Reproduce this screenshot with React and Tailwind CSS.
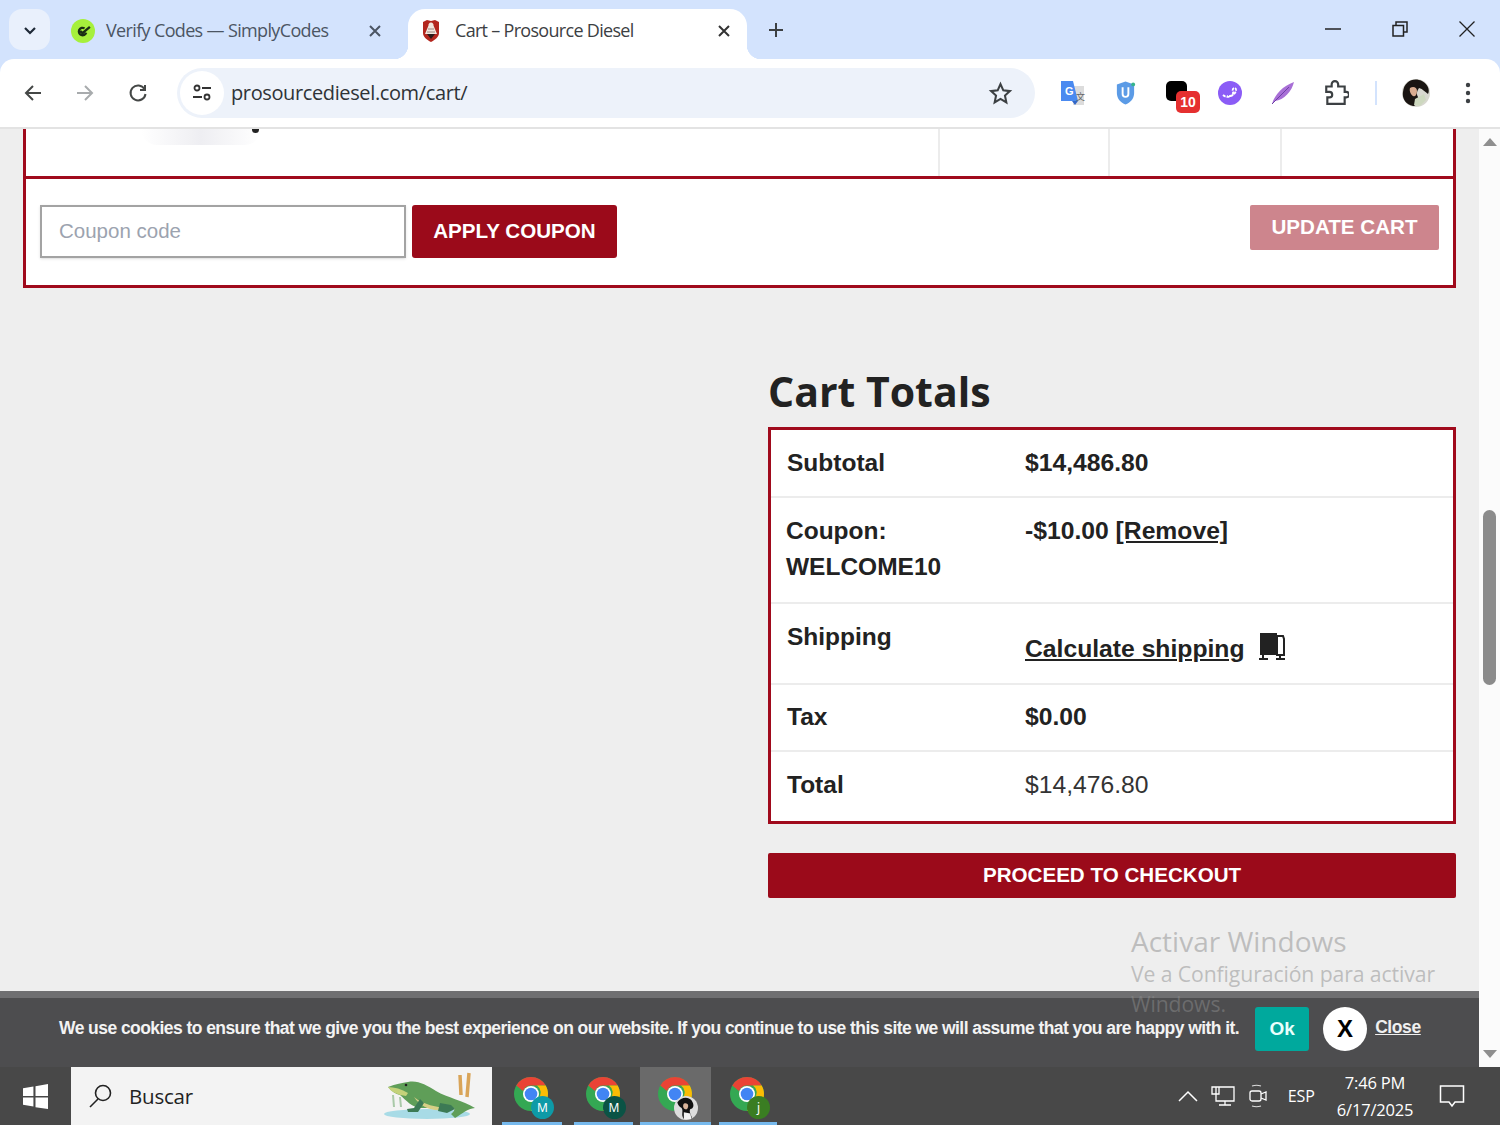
import React from "react";

const Chrome = ({ badge, badgeBg, photo }) => (
  <div className="relative w-[38px] h-[38px]">
    <svg viewBox="0 0 36 36" className="w-[36px] h-[36px]">
      <circle cx="18" cy="18" r="17" fill="#34a853" />
      <path d="M18 1a17 17 0 0 1 14.7 8.5H18a8.5 8.5 0 0 0-8 5.6L3.3 9.5A17 17 0 0 1 18 1z" fill="#ea4335" />
      <path d="M32.7 9.5A17 17 0 0 1 18 35l7.4-12.7A8.5 8.5 0 0 0 24 9.5z" fill="#fbbc04" />
      <circle cx="18" cy="18" r="8" fill="#fff" />
      <circle cx="18" cy="18" r="6.3" fill="#4285f4" />
    </svg>
    {photo ? (
      <svg viewBox="0 0 22 22" className="absolute right-[-3px] bottom-[-6px] w-[24px] h-[24px]">
        <circle cx="11" cy="11" r="11" fill="#ddd" />
        <path d="M3 6c3-5 10-6 13-2 3 4 2 8-1 8-2 3 2 6 1 9H9C6 17 9 14 7 11 5 10 4 9 3 6z" fill="#111" />
        <path d="M9 7c2-1 4 0 4 2s-1 4-3 3-2-4-1-5z" fill="#d9b49a" />
        <path d="M9 15l6 1 1 5H9z" fill="#f2f2f2" />
      </svg>
    ) : (
      <div className={`absolute right-[-3px] bottom-[-5px] w-[23px] h-[23px] rounded-full ${badgeBg} text-white text-[12px] leading-[23px] text-center font-['Noto_Sans',sans-serif]`}>{badge}</div>
    )}
  </div>
);

const Row = ({ label, value, h, labelClass = "", valueClass = "font-bold text-[24.700px]", last }) => (
  <div className={`flex ${h} ${last ? "" : "border-b-2 border-[#ececec]"}`}>
    <div className={`w-[254px] pl-[16px] font-bold ${labelClass}`}>{label}</div>
    <div className={valueClass}>{value}</div>
  </div>
);

export default function App() {
  return (
    <div className="relative w-[1500px] h-[1125px] overflow-hidden flex flex-col bg-[#eeeeee] font-['Liberation_Sans',sans-serif]">
      {/* Tab strip */}
      <div className="h-[59px] shrink-0 bg-[#d3e3fd] flex items-end pl-[9px] font-['Open_Sans',sans-serif]">
        <div className="w-[41px] h-[41px] mb-[9px] rounded-[13px] bg-[#e9f0fc] flex items-center justify-center">
          <svg viewBox="0 0 14 14" className="w-[14px] h-[14px]"><path d="M2 5l5 5 5-5" fill="none" stroke="#1f2937" strokeWidth="2.2" /></svg>
        </div>
        <div className="w-[358px] h-[50px] flex items-center pl-[21px] pr-[27px] pb-[7px] text-[#4b5563] text-[18px] tracking-[-0.65px]">
          <div className="w-[24px] h-[24px] rounded-full bg-[#a6f03c] flex items-center justify-center mr-[11px]">
            <svg viewBox="0 0 16 16" className="w-[17px] h-[17px]"><path d="M9 6A3.500 3.500 0 1 0 10.500 10M5 8.500l2 2 7-6" fill="none" stroke="#1a2e14" strokeWidth="2.200" /></svg>
          </div>
          <span className="flex-1 whitespace-nowrap">Verify Codes — SimplyCodes</span>
          <svg viewBox="0 0 12 12" className="w-[12px] h-[12px]"><path d="M1 1l10 10M11 1L1 11" stroke="#4b5563" strokeWidth="2" /></svg>
        </div>
        <div className="relative w-[339px] h-[50px] bg-white rounded-t-[17px] flex items-center pl-[12px] pr-[17px] pb-[7px] text-[#3c4043] text-[18px] tracking-[-0.7px]">
          <span className="absolute left-[-14px] bottom-0 w-[14px] h-[14px] bg-[radial-gradient(circle_at_0_0,transparent_14px,white_14.5px)]" />
          <span className="absolute right-[-14px] bottom-0 w-[14px] h-[14px] bg-[radial-gradient(circle_at_100%_0,transparent_14px,white_14.5px)]" />
          <svg viewBox="0 0 20 24" className="w-[22px] h-[24px] mr-[13px]">
            <path d="M2 3l4-2 4 1 4-1 4 2v11c0 4-4 7-8 9-4-2-8-5-8-9z" fill="#b3261e" />
            <path d="M10 3.500a2.500 2.500 0 0 1 2.500 3L16 15H4l3.500-8.500A2.500 2.500 0 0 1 10 3.500z" fill="#f1e6de" />
            <path d="M7 10h6M6 13h8" stroke="#8a6d64" strokeWidth="0.800" />
            <path d="M6 15h8l-4 5z" fill="#2b1a1a" />
          </svg>
          <span className="flex-1 whitespace-nowrap">Cart – Prosource Diesel</span>
          <svg viewBox="0 0 12 12" className="w-[12px] h-[12px]"><path d="M1 1l10 10M11 1L1 11" stroke="#333" strokeWidth="2" /></svg>
        </div>
        <svg viewBox="0 0 16 16" className="w-[16px] h-[16px] ml-[21px] mb-[21px]"><path d="M8 1v14M1 8h14" stroke="#3c4043" strokeWidth="2" /></svg>
        <div className="ml-auto flex items-center h-[59px] pb-[2px]">
          <svg viewBox="0 0 16 16" className="w-[16px] h-[16px] mr-[51px]"><path d="M0 8h16" stroke="#222" strokeWidth="1.5" /></svg>
          <svg viewBox="0 0 16 16" className="w-[16px] h-[16px] mr-[51px]"><path d="M1 4.500h10.500V15H1zM4 4.500V1h11v10h-3.500" fill="none" stroke="#222" strokeWidth="1.500" /></svg>
          <svg viewBox="0 0 16 16" className="w-[16px] h-[16px] mr-[25px]"><path d="M.5.5l15 15M15.500.5l-15 15" stroke="#222" strokeWidth="1.300" /></svg>
        </div>
      </div>

      {/* Toolbar */}
      <div className="h-[68px] shrink-0 bg-[#d3e3fd]">
        <div className="h-full bg-white rounded-t-[14px] flex items-center pl-[23px]">
          <svg viewBox="0 0 20 20" className="w-[20px] h-[20px]"><path d="M18 10H3M10 3l-7 7 7 7" fill="none" stroke="#444746" strokeWidth="2" /></svg>
          <svg viewBox="0 0 20 20" className="w-[20px] h-[20px] ml-[32px]"><path d="M2 10h15M10 3l7 7-7 7" fill="none" stroke="#a8abad" strokeWidth="2" /></svg>
          <svg viewBox="0 0 20 20" className="w-[20px] h-[20px] ml-[33px]"><path d="M16.500 6A7.500 7.500 0 1 0 17.500 11M17 2v5h-5" fill="none" stroke="#444746" strokeWidth="2" /></svg>
          <div className="ml-[29px] w-[858px] h-[50px] rounded-full bg-[#edf2fa] flex items-center pl-[3px] pr-[22px]">
            <div className="w-[44px] h-[44px] rounded-full bg-white flex items-center justify-center">
              <svg viewBox="0 0 20 20" className="w-[20px] h-[20px]"><circle cx="5" cy="5" r="2.500" fill="none" stroke="#333" strokeWidth="1.800" /><path d="M10 5h9M1 14h9" stroke="#333" strokeWidth="1.800" /><circle cx="15" cy="14" r="2.500" fill="none" stroke="#333" strokeWidth="1.800" /></svg>
            </div>
            <span className="ml-[7px] flex-1 text-[20px] tracking-[-0.38px] text-[#2f3337] font-['Open_Sans',sans-serif]">prosourcediesel.com/cart/</span>
            <svg viewBox="0 0 24 24" className="w-[25px] h-[25px]"><path d="M12 3l2.700 6 6.300.700-4.700 4.300 1.300 6.500L12 17.200 6.400 20.500l1.300-6.500L3 9.700 9.300 9z" fill="none" stroke="#3c4043" strokeWidth="2" /></svg>
          </div>
          <div className="flex items-center ml-[25px]">
            <svg viewBox="0 0 26 26" className="w-[26px] h-[26px]">
              <path d="M14 6h10v19H13z" fill="#dcdcdc" />
              <path d="M1 1h12l5 20H1z" fill="#4a8af0" />
              <path d="M12 21l3 4 3-4z" fill="#3367c7" />
              <text x="5" y="15" fontSize="11" fontWeight="700" fill="#fff" fontFamily="Liberation Sans">G</text>
              <text x="16" y="20" fontSize="9" fill="#666" fontFamily="Noto Sans CJK SC">文</text>
            </svg>
            <svg viewBox="0 0 24 26" className="w-[23px] h-[26px] ml-[28px]">
              <path d="M12 1l9 3v9c0 6-4 10-9 12C7 23 3 19 3 13V4z" fill="#5b9be6" />
              <path d="M8 7v7a4 4 0 0 0 8 0V7h-2v7a2 2 0 0 1-4 0V7z" fill="#fff" />
              <circle cx="20" cy="4" r="2" fill="#34b48c" />
            </svg>
            <div className="relative w-[30px] h-[34px] ml-[29px]">
              <div className="w-[21px] h-[20px] mt-[5px] rounded-[5px] bg-black" />
              <div className="absolute right-[-4px] bottom-[-3px] w-[24px] h-[22px] rounded-[5px] bg-[#e53030] text-white text-[14px] leading-[22px] font-bold text-center">10</div>
            </div>
            <svg viewBox="0 0 24 24" className="w-[24px] h-[24px] ml-[22px]">
              <circle cx="12" cy="12" r="12" fill="#8b5cf6" />
              <path d="M5 14c3 3 8 2 11-1 2-2 3-5 1-6-2 0-3 2-2 4 1 3-3 5-6 4" fill="none" stroke="#fff" strokeWidth="1.800" strokeDasharray="3 1" />
            </svg>
            <svg viewBox="0 0 24 24" className="w-[24px] h-[24px] ml-[29px]">
              <path d="M1 23C4 13 12 5 23 1 21 10 13 19 4 20z" fill="#a86fd6" />
              <path d="M1 23L18 6" stroke="#6d3fa6" strokeWidth="1" />
            </svg>
            <svg viewBox="0 0 24 24" className="w-[26px] h-[26px] ml-[28px]">
              <path d="M3 6h5V4a3 3 0 0 1 6 0v2h6v5h1.500a2.500 2.500 0 0 1 0 5H20v6H4v-6h2a2.500 2.500 0 0 0 0-5H3z" fill="none" stroke="#3c4043" strokeWidth="2" />
            </svg>
            <div className="w-[2px] h-[24px] bg-[#d3e3fd] ml-[26px]" />
            <svg viewBox="0 0 30 30" className="w-[30px] h-[30px] ml-[24px]">
              <circle cx="15" cy="15" r="14" fill="#d8d8d0" />
              <path d="M2 14C3 3 13-1 21 3c6 3 8 9 6 13-3-2-5-5-9-6-2 3-3 6-1 9 1 4-2 9-5 9C4 26 1 20 2 14z" fill="#1a1512" />
              <path d="M9 10c3-2 7-1 7 3s-2 6-4 5-4-5-3-8z" fill="#d9ac90" />
              <path d="M14 21l9-5 2 6-6 6-6-1z" fill="#cdd8bf" />
            </svg>
            <svg viewBox="0 0 6 22" className="w-[6px] h-[22px] ml-[34px]">
              <circle cx="3" cy="3" r="2.200" fill="#3c4043" /><circle cx="3" cy="11" r="2.200" fill="#3c4043" /><circle cx="3" cy="19" r="2.200" fill="#3c4043" />
            </svg>
          </div>
        </div>
      </div>

      {/* Viewport */}
      <div className="relative flex-1 min-h-0 flex border-t-2 border-[#e3e3e3]">
        <main className="w-[1479px] pl-[23px] pr-[23px] text-[#222222]">
          {/* Cart table remainder */}
          <div className="border-x-[3px] border-b-[3px] border-[#a00a1c] bg-white">
            <div className="relative h-[50px] flex border-b-[3px] border-[#a00a1c]">
              <div className="w-[914px] border-r-2 border-[#ececec]" />
              <div className="w-[170px] border-r-2 border-[#ececec]" />
              <div className="w-[172px] border-r-2 border-[#ececec]" />
              <div className="absolute left-[115px] top-0 w-[120px] h-[16px] bg-gradient-to-r from-white via-[#eeeef2] to-white rounded-b-full" />
              <div className="absolute left-[226px] top-0 w-[7px] h-[4px] rounded-b-full bg-[#222]" />
            </div>
            <div className="h-[106px] flex items-start pl-[14px] pr-[14px] pt-[26px]">
              <div className="w-[366px] h-[53px] border-2 border-[#a3a3a3] bg-white flex items-center pl-[17px] text-[20.500px] text-[#9ca3af] shadow-sm">Coupon code</div>
              <button className="ml-[6px] w-[205px] h-[53px] rounded-[3px] bg-[#9b0a1a] text-white text-[20.600px] font-bold">APPLY COUPON</button>
              <button className="ml-auto w-[189px] h-[45px] rounded-[2px] bg-[#cd858d] text-white text-[20.600px] font-bold">UPDATE CART</button>
            </div>
          </div>

          {/* Cart totals */}
          <div className="ml-[745px] w-[688px] mt-[76px]">
            <h2 className="text-[41px] leading-[54px] font-bold text-[#222] font-['Open_Sans',sans-serif]">Cart Totals</h2>
            <div className="mt-[9px] border-[3px] border-[#a00a1c] bg-white text-[24.500px]">
              <Row label="Subtotal" value="$14,486.80" h="h-[68px] pt-[19px] leading-[28px]" />
              <div className="flex h-[106px] border-b-2 border-[#ececec] pt-[15px] leading-[36px]">
                <div className="w-[254px] pl-[15px] font-bold">Coupon:<br />WELCOME10</div>
                <div className="font-bold text-[24.700px]">-$10.00 <span className="underline">[Remove]</span></div>
              </div>
              <div className="flex h-[81px] border-b-2 border-[#ececec]">
                <div className="w-[254px] pl-[16px] pt-[19px] leading-[28px] font-bold">Shipping</div>
                <div className="flex items-start pt-[31px] leading-[28px] font-bold text-[24.700px]">
                  <span className="underline">Calculate shipping</span>
                  <svg viewBox="0 0 26 28" className="w-[26px] h-[28px] ml-[15px] mt-[-2px]">
                    <path d="M1 0h17v22H1z" fill="#222" />
                    <path d="M18 3h6l1 3v16h-7z" fill="none" stroke="#222" strokeWidth="2" />
                    <path d="M0 26h9M17 26h9M4 22v3M21 22v3" stroke="#222" strokeWidth="2" />
                  </svg>
                </div>
              </div>
              <Row label="Tax" value="$0.00" h="h-[67px] pt-[18px] leading-[28px]" />
              <Row label="Total" value="$14,476.80" valueClass="font-normal text-[#333] text-[24.700px]" h="h-[69px] pt-[19px] leading-[28px]" last />
            </div>
            <button className="mt-[29px] w-[688px] h-[45px] rounded-[2px] bg-[#9b0a1a] text-white text-[20.600px] font-bold">PROCEED TO CHECKOUT</button>
          </div>
        </main>

        {/* Scrollbar */}
        <aside className="w-[21px] bg-[#fbfbfb] flex flex-col items-center justify-between py-[9px] relative">
          <div className="w-0 h-0 border-x-[7px] border-x-transparent border-b-[8px] border-b-[#8f8f8f]" />
          <div className="absolute left-[4px] top-[381px] w-[13px] h-[175px] rounded-full bg-[#8b8b8b]" />
          <div className="w-0 h-0 border-x-[7px] border-x-transparent border-t-[8px] border-t-[#8f8f8f]" />
        </aside>

        {/* Cookie notice */}
        <div className="absolute left-0 bottom-0 w-[1479px] h-[76px] bg-[#4d4d4f] border-t-[7px] border-[#6f6f71] flex items-center pl-[59px] text-white">
          <p className="text-[17.500px] font-bold tracking-[-0.56px] text-[#f3f3f3] whitespace-nowrap mt-[-8px]">We use cookies to ensure that we give you the best experience on our website. If you continue to use this site we will assume that you are happy with it.</p>
          <button className="ml-[16px] w-[54px] h-[44px] rounded-[3px] bg-[#00a99d] text-[19px] font-bold text-[#e8fffc] mt-[-7px]">Ok</button>
          <div className="ml-[14px] w-[44px] h-[44px] rounded-full bg-white text-black flex items-center justify-center text-[24px] font-bold mt-[-8px]">X</div>
          <span className="ml-[8px] underline font-bold text-[17.500px] tracking-[-0.4px] text-[#f0f0f0] mt-[-10px]">Close</span>
        </div>

        {/* Activation watermark */}
        <div className="absolute left-[1131px] top-[794px] text-[rgba(140,140,140,0.5)] font-['Open_Sans',sans-serif] pointer-events-none">
          <div className="text-[28px] leading-[36px]">Activar Windows</div>
          <div className="text-[21.200px] leading-[30px] tracking-[-0.1px] whitespace-nowrap">Ve a Configuración para activar</div>
          <div className="text-[21.200px] leading-[30px] tracking-[-0.1px] w-fit">Windows.</div>
        </div>
      </div>

      {/* Taskbar */}
      <footer className="h-[58px] shrink-0 bg-[#484848] flex items-stretch font-['Open_Sans',sans-serif]">
        <div className="w-[71px] flex items-center justify-center">
          <svg viewBox="0 0 24 24" className="w-[25px] h-[25px]"><path d="M0 4l10-1.500V11.500H0zM12 2.200L24 0v11.500H12zM0 13h10v8.500L0 20zM12 13h12v11l-12-1.800z" fill="#fff" /></svg>
        </div>
        <div className="w-[421px] bg-[#f3f3f3] flex items-center pl-[17px]">
          <svg viewBox="0 0 26 26" className="w-[26px] h-[26px]"><circle cx="15" cy="10" r="7.500" fill="none" stroke="#222" strokeWidth="1.600" /><path d="M10 16l-8 8" stroke="#222" strokeWidth="1.600" /></svg>
          <span className="ml-[15px] text-[20.500px] text-[#222] tracking-[-0.2px]">Buscar</span>
          <svg viewBox="0 2 110 58" className="ml-auto mr-[2px] w-[110px] h-[58px]">
            <ellipse cx="47" cy="49" rx="43" ry="5" fill="#a8dbe6" />
            <path d="M80 10l1 20M89 8l-2 24" stroke="#d9a458" strokeWidth="3.500" />
            <path d="M13 30l1 12M20 32l1 10" stroke="#a9c9a8" strokeWidth="2" />
            <path d="M8 22c8-3 14-4 20-5 10-2 18 3 28 9 12 7 26 9 39 17-8 1-12 5-20 10l-4-4c3-2 4-5 3-6H42c-10 0-16-8-22-13-4-1-9-4-12-8z" fill="#5f9e58" />
            <path d="M8 22c6 0 14 2 20 6l-2 3c-8-1-15-4-18-9z" fill="#c4d27a" />
            <path d="M34 32c8 7 24 11 34 11l-6 2c-12 1-22-4-28-13z" fill="#d6cf85" />
            <path d="M40 34l-6 9-7 1 1 3h10l6-9zM60 38l-2 8 9 2 8-4-4-4z" fill="#3c7a55" />
            <circle cx="26" cy="20" r="1.300" fill="#222" />
          </svg>
        </div>
        <div className="flex ml-[10px]">
          <div className="w-[60px] flex items-center justify-center border-b-[3px] border-[#76b9ed]"><Chrome badge="M" badgeBg="bg-[#0e9aa7]" /></div>
          <div className="w-[59px] ml-[12px] flex items-center justify-center border-b-[3px] border-[#76b9ed]"><Chrome badge="M" badgeBg="bg-[#0b5345]" /></div>
          <div className="w-[71px] ml-[7px] bg-[#6a6a6a] flex items-center justify-center border-b-[3px] border-[#76b9ed]"><Chrome photo /></div>
          <div className="w-[58px] ml-[8px] flex items-center justify-center border-b-[3px] border-[#76b9ed]"><Chrome badge="j" badgeBg="bg-[#3a7d22]" /></div>
        </div>
        <div className="ml-auto flex items-center text-white pr-[35px]">
          <svg viewBox="0 0 20 12" className="w-[20px] h-[12px]"><path d="M1 11l9-9 9 9" fill="none" stroke="#fff" strokeWidth="1.500" /></svg>
          <svg viewBox="0 0 24 22" className="w-[24px] h-[22px] ml-[13px]"><path d="M5 2h18v14H5zM14 16v4M8 20h12M1 2h7v7H1z" fill="#484848" stroke="#fff" strokeWidth="1.300" /></svg>
          <svg viewBox="0 0 18 24" className="w-[18px] h-[24px] ml-[14px]"><path d="M3 2c3-1 6-1 9 0M3 22c3 1 6 1 9 0" stroke="#ddd" strokeWidth="1.200" fill="none" /><rect x="1" y="7" width="11" height="10" rx="2" fill="none" stroke="#fff" strokeWidth="1.300" /><path d="M12 10l5-2v8l-5-2" fill="none" stroke="#fff" strokeWidth="1.300" /></svg>
          <span className="ml-[21px] text-[16px]">ESP</span>
          <div className="ml-[21px] w-[78px] text-[16.500px] leading-[27px] text-center tracking-[-0.2px] whitespace-nowrap"><div>7:46 PM</div><div>6/17/2025</div></div>
          <svg viewBox="0 0 26 26" className="w-[26px] h-[26px] ml-[25px]"><path d="M1.500 3h23v16H16l-3 4-3-4H1.500z" fill="none" stroke="#fff" strokeWidth="1.500" /></svg>
        </div>
      </footer>
    </div>
  );
}
